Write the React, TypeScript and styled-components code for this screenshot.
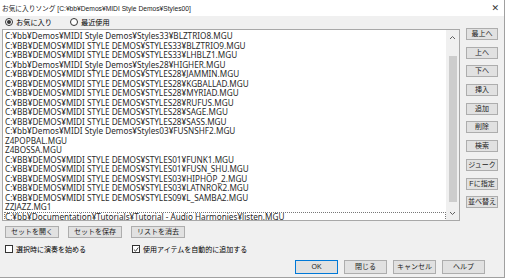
import React from "react"
import styled, { createGlobalStyle } from "styled-components"

const GlobalStyle = createGlobalStyle`
  html, body {
    margin: 0;
    padding: 0;
    background: #f0f0f0;
  }
  * {
    box-sizing: border-box;
  }
`

const jp = `"Liberation Sans", "Noto Sans CJK JP", sans-serif`

const Dialog = styled.div`
  width: 505px;
  height: 278px;
  background: #f0f0f0;
  border-right: 1px solid #a0a0a0;
  border-bottom: 1px solid #a0a0a0;
  display: flex;
  flex-direction: column;
  font-family: ${jp};
  color: #000;
  overflow: hidden;
`

const TitleBar = styled.div`
  height: 16px;
  background: #fff;
  display: flex;
  align-items: center;
  justify-content: space-between;
  padding: 0 5px 0 2px;
  font-size: 6.7px;
  color: #222;
`

const Close = styled.span`
  font-family: "DejaVu Sans", sans-serif;
  font-size: 9px;
  color: #333;
`

const RadioRow = styled.div`
  height: 12px;
  display: flex;
  align-items: center;
  gap: 18px;
  padding-left: 5px;
  font-size: 7.2px;
`

const Choice = styled.label`
  display: flex;
  align-items: center;
  gap: 3px;
`

const Radio = styled.span<{ $on?: boolean }>`
  width: 8px;
  height: 8px;
  border-radius: 50%;
  border: 1px solid #333;
  background: #fff;
  display: flex;
  align-items: center;
  justify-content: center;
  &::after {
    content: "";
    display: ${p => (p.$on ? "block" : "none")};
    width: 4px;
    height: 4px;
    border-radius: 50%;
    background: #333;
  }
`

const Main = styled.div`
  display: flex;
  align-items: flex-start;
  gap: 6px;
  padding-left: 2px;
`

const ListBox = styled.div`
  width: 458px;
  height: 192px;
  margin-top: 1px;
  background: #fff;
  border: 1px solid #a8a8a8;
  display: flex;
`

const Items = styled.div`
  flex: 1;
  padding: 1px 0 0 1px;
  font-family: "Noto Sans", sans-serif;
  font-size: 8.2px;
  line-height: 9.5px;
  color: #2a2a2a;
  white-space: nowrap;
  overflow: hidden;
`

const Item = styled.div<{ $focus?: boolean }>`
  height: 9.5px;
  padding-left: 1px;
  outline: ${p => (p.$focus ? "1px dotted #777" : "none")};
  outline-offset: -1px;
`

const ScrollBar = styled.div`
  width: 13px;
  background: #f0f0f0;
  display: flex;
  flex-direction: column;
  align-items: center;
`

const Arrow = styled.div`
  height: 14px;
  display: flex;
  align-items: center;
  justify-content: center;
`

const Track = styled.div`
  flex: 1;
  width: 100%;
  padding: 12px 2px 4px 3px;
  display: flex;
`

const Thumb = styled.div`
  flex: 1;
  background: #cdcdcd;
`

const SideCol = styled.div`
  display: flex;
  flex-direction: column;
  gap: 6.7px;
`

const SideButton = styled.button`
  width: 32px;
  height: 12px;
  padding: 0;
  background: #e1e1e1;
  border: 1px solid #adadad;
  font-family: ${jp};
  font-size: 7px;
  line-height: 10px;
  color: #222;
  white-space: nowrap;
`

const ButtonRow = styled.div`
  display: flex;
  gap: 9px;
  padding: 5px 0 0 5px;
`

const SetButton = styled.button`
  width: 54px;
  height: 12px;
  padding: 0;
  background: #e1e1e1;
  border: 1px solid #adadad;
  font-family: ${jp};
  font-size: 7px;
  line-height: 10px;
  color: #222;
`

const CheckRow = styled.div`
  display: flex;
  padding: 6px 0 0 5px;
  font-size: 7px;
`

const Check = styled.label<{ $width?: number }>`
  display: flex;
  align-items: center;
  gap: 3px;
  width: ${p => (p.$width ? `${p.$width}px` : "auto")};
`

const Box = styled.span`
  width: 8px;
  height: 8px;
  border: 1px solid #333;
  background: #fff;
  display: flex;
  align-items: center;
  justify-content: center;
`

const Footer = styled.div`
  display: flex;
  justify-content: flex-end;
  gap: 6px;
  padding: 6px 19px 0 0;
`

const DlgButton = styled.button<{ $default?: boolean }>`
  width: 43px;
  height: 14px;
  padding: 0;
  background: #e1e1e1;
  border: 1px solid ${p => (p.$default ? "#0078d7" : "#adadad")};
  font-family: ${jp};
  font-size: 7px;
  line-height: 12px;
  color: #222;
`

const Chevron = ({ down }: { down?: boolean }) => (
  <svg width="7" height="5" viewBox="0 0 7 5">
    <path
      d={down ? "M1 1 L3.5 3.5 L6 1" : "M1 4 L3.5 1.5 L6 4"}
      fill="none"
      stroke="#606060"
      strokeWidth="1"
    />
  </svg>
)

const files = [
  "C:¥bb¥Demos¥MIDI Style Demos¥Styles33¥BLZTRIO8.MGU",
  "C:¥BB¥DEMOS¥MIDI STYLE DEMOS¥STYLES33¥BLZTRIO9.MGU",
  "C:¥BB¥DEMOS¥MIDI STYLE DEMOS¥STYLES33¥LHBLZ1.MGU",
  "C:¥bb¥Demos¥MIDI Style Demos¥Styles28¥HIGHER.MGU",
  "C:¥BB¥DEMOS¥MIDI STYLE DEMOS¥STYLES28¥JAMMIN.MGU",
  "C:¥BB¥DEMOS¥MIDI STYLE DEMOS¥STYLES28¥KGBALLAD.MGU",
  "C:¥BB¥DEMOS¥MIDI STYLE DEMOS¥STYLES28¥MYRIAD.MGU",
  "C:¥BB¥DEMOS¥MIDI STYLE DEMOS¥STYLES28¥RUFUS.MGU",
  "C:¥BB¥DEMOS¥MIDI STYLE DEMOS¥STYLES28¥SAGE.MGU",
  "C:¥BB¥DEMOS¥MIDI STYLE DEMOS¥STYLES28¥SASS.MGU",
  "C:¥bb¥Demos¥MIDI Style Demos¥Styles03¥FUSNSHF2.MGU",
  "Z4POPBAL.MGU",
  "Z4BOSSA.MGU",
  "C:¥BB¥DEMOS¥MIDI STYLE DEMOS¥STYLES01¥FUNK1.MGU",
  "C:¥BB¥DEMOS¥MIDI STYLE DEMOS¥STYLES01¥FUSN_SHU.MGU",
  "C:¥BB¥DEMOS¥MIDI STYLE DEMOS¥STYLES03¥HIPHOP_2.MGU",
  "C:¥BB¥DEMOS¥MIDI STYLE DEMOS¥STYLES03¥LATNROK2.MGU",
  "C:¥BB¥DEMOS¥MIDI STYLE DEMOS¥STYLES09¥L_SAMBA2.MGU",
  "ZZJAZZ.MG1",
  "C:¥bb¥Documentation¥Tutorials¥Tutorial - Audio Harmonies¥listen.MGU",
]

const sideButtons = ["最上へ", "上へ", "下へ", "挿入", "追加", "削除", "検索", "ジューク", "Fに指定", "並べ替え"]

export default function App() {
  return (
    <Dialog>
      <GlobalStyle />
      <TitleBar>
        <span>お気に入りソング [C:¥bb¥Demos¥MIDI Style Demos¥Styles00]</span>
        <Close>✕</Close>
      </TitleBar>
      <RadioRow>
        <Choice><Radio $on />お気に入り</Choice>
        <Choice><Radio />最近使用</Choice>
      </RadioRow>
      <Main>
        <ListBox>
          <Items>
            {files.map((f, i) => (
              <Item key={i} $focus={i === files.length - 1}>{f}</Item>
            ))}
          </Items>
          <ScrollBar>
            <Arrow><Chevron /></Arrow>
            <Track><Thumb /></Track>
            <Arrow><Chevron down /></Arrow>
          </ScrollBar>
        </ListBox>
        <SideCol>
          {sideButtons.map(b => (
            <SideButton key={b}>{b}</SideButton>
          ))}
        </SideCol>
      </Main>
      <ButtonRow>
        <SetButton>セットを開く</SetButton>
        <SetButton>セットを保存</SetButton>
        <SetButton>リストを消去</SetButton>
      </ButtonRow>
      <CheckRow>
        <Check $width={127}><Box />選択時に演奏を始める</Check>
        <Check>
          <Box>
            <svg width="7" height="7" viewBox="0 0 7 7">
              <path d="M1 3.5 L3 5.5 L6.2 1.2" fill="none" stroke="#222" strokeWidth="1" />
            </svg>
          </Box>
          使用アイテムを自動的に追加する
        </Check>
      </CheckRow>
      <Footer>
        <DlgButton $default>OK</DlgButton>
        <DlgButton>閉じる</DlgButton>
        <DlgButton>キャンセル</DlgButton>
        <DlgButton>ヘルプ</DlgButton>
      </Footer>
    </Dialog>
  )
}
